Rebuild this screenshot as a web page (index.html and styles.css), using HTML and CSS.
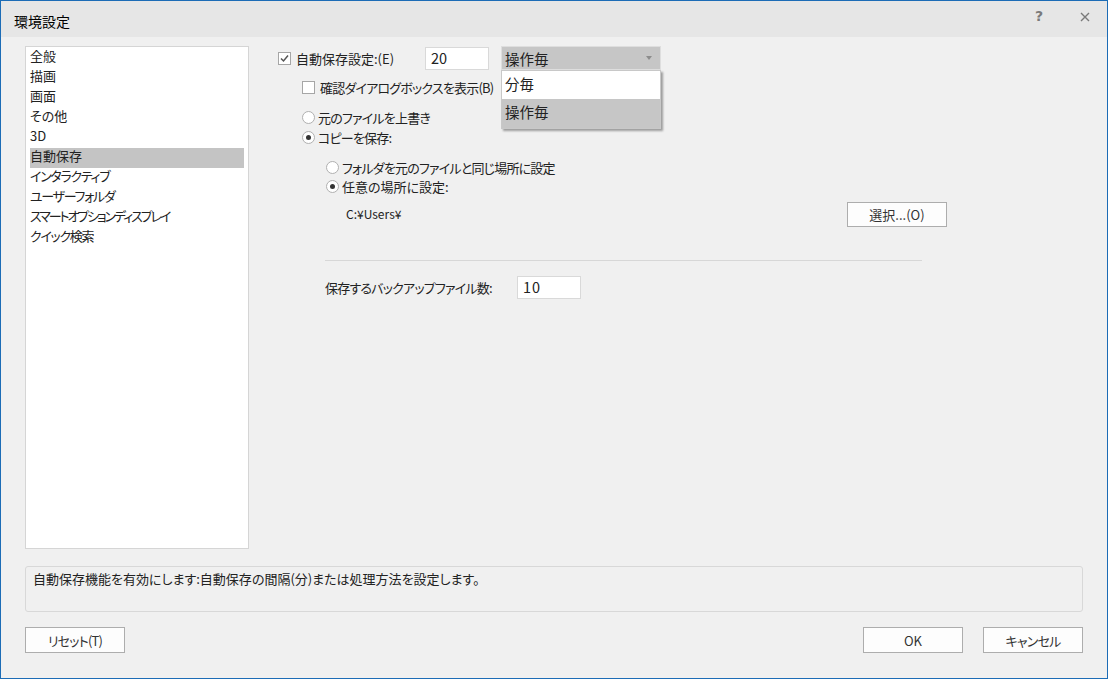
FILE: index.html
```html
<!DOCTYPE html>
<html>
<head>
    <title>環境設定</title>
    <link rel="stylesheet" href="styles.css">
</head>
<body>
    <div class="window">
        <div class="titlebar">
            <span class="title">環境設定</span>
            <div class="title-buttons">
                <span class="tb-help">?</span>
                <span class="tb-close">
                    <svg width="10" height="10" viewBox="0 0 10 10"><path d="M1 1L9 9M9 1L1 9" stroke="#7a7a7a" stroke-width="1.4"/></svg>
                </span>
            </div>
        </div>

        <div class="content">
            <div class="main">
                <ul class="category-list">
                    <li>全般</li>
                    <li>描画</li>
                    <li>画面</li>
                    <li>その他</li>
                    <li>3D</li>
                    <li class="selected">自動保存</li>
                    <li class="kana">インタラクティブ</li>
                    <li class="kana">ユーザーフォルダ</li>
                    <li class="kana wide">スマートオプションディスプレイ</li>
                    <li class="kana">クイック検索</li>
                </ul>

                <div class="settings">
                    <div class="row row-autosave">
                        <label class="check-label autosave-label">
                            <span class="checkbox checked">
                                <svg width="11" height="11" viewBox="0 0 11 11"><path d="M2 5.5L4.5 8L9 2.5" fill="none" stroke="#555" stroke-width="1.5"/></svg>
                            </span>
                            自動保存設定:(E)
                        </label>
                        <div class="textbox interval">20</div>
                        <div class="combo">
                            <div class="combo-field">
                                <span>操作毎</span>
                                <span class="combo-arrow"></span>
                            </div>
                            <div class="combo-popup">
                                <div class="combo-item">分毎</div>
                                <div class="combo-item active">操作毎</div>
                            </div>
                        </div>
                    </div>

                    <div class="row row-confirm indent-1">
                        <label class="check-label label-kana">
                            <span class="checkbox"></span>
                            確認ダイアログボックスを表示(B)
                        </label>
                    </div>

                    <div class="row row-radio first indent-1 label-kana">
                        <span class="radio"></span>元のファイルを上書き
                    </div>
                    <div class="row row-radio indent-1 label-kana">
                        <span class="radio on"></span>コピーを保存:
                    </div>

                    <div class="row row-radio first indent-2 label-kana">
                        <span class="radio"></span>フォルダを元のファイルと同じ場所に設定
                    </div>
                    <div class="row row-radio tight indent-2">
                        <span class="radio on"></span>任意の場所に設定:
                    </div>

                    <div class="row row-path">
                        <span class="path">C:¥Users¥</span>
                        <button class="btn">選択...(O)</button>
                    </div>

                    <div class="separator"></div>

                    <div class="row row-backup">
                        <span class="backup-label label-kana">保存するバックアップファイル数:</span>
                        <div class="textbox backup">10</div>
                    </div>
                </div>
            </div>

            <div class="description">自動保存機能を有効にします:自動保存の間隔(分)または処理方法を設定します。</div>

            <div class="footer">
                <button class="btn label-kana">リセット(T)</button>
                <div class="footer-right">
                    <button class="btn">OK</button>
                    <button class="btn label-kana">キャンセル</button>
                </div>
            </div>
        </div>
    </div>
</body>
</html>
```

FILE: styles.css
```css
html, body {
    margin: 0;
    padding: 0;
}

body {
    width: 1108px;
    height: 679px;
    font-family: "Noto Sans CJK JP", "Noto Sans", sans-serif;
    font-size: 13px;
    font-feature-settings: "palt";
    color: #222;
    overflow: hidden;
}

.window {
    width: 1108px;
    height: 679px;
    box-sizing: border-box;
    border: 1px solid #1c6cb6;
    background-color: #f0f0f0;
    display: flex;
    flex-direction: column;
}

.titlebar {
    height: 36px;
    background-color: #e6e6e6;
    display: flex;
    align-items: center;
    justify-content: space-between;
    padding: 0 17px 0 13px;
    flex-shrink: 0;
}

.title {
    font-size: 14px;
    color: #000;
    margin-top: 4px;
}

.title-buttons {
    display: flex;
    align-items: center;
    gap: 37px;
    margin-top: -6px;
}

.tb-help {
    font-family: "DejaVu Sans", sans-serif;
    font-size: 14px;
    font-weight: bold;
    color: #7a7a7a;
}

.tb-close {
    display: flex;
    margin-top: 2px;
}

.content {
    flex: 1;
    padding: 9px 24px 0 24px;
    display: flex;
    flex-direction: column;
}

.main {
    display: flex;
    gap: 29px;
    height: 503px;
}

.category-list {
    list-style: none;
    margin: 0;
    padding: 1px 4px;
    width: 224px;
    box-sizing: border-box;
    background-color: #fff;
    border: 1px solid #d5d5d5;
    flex-shrink: 0;
}

.category-list li {
    height: 20px;
    line-height: 16px;
    white-space: nowrap;
}

.category-list li.kana {
    letter-spacing: -1.3px;
}

.category-list li.wide {
    letter-spacing: -2.1px;
}

.category-list li.selected {
    background-color: #c4c4c4;
}

.label-kana {
    letter-spacing: -0.8px;
}

.settings {
    flex: 1;
    position: relative;
}

.row {
    display: flex;
    align-items: center;
    white-space: nowrap;
}

.row-autosave {
    height: 24px;
}

.check-label {
    display: flex;
    align-items: center;
}

.autosave-label {
    width: 147px;
}

.checkbox {
    width: 13px;
    height: 13px;
    box-sizing: border-box;
    border: 1px solid #a6a6a6;
    background-color: #fff;
    margin-right: 5px;
    display: flex;
    align-items: center;
    justify-content: center;
}

.textbox {
    height: 23px;
    box-sizing: border-box;
    border: 1px solid #d9d9d9;
    background-color: #fff;
    font-size: 14.5px;
    line-height: 20px;
    padding-left: 5px;
}

.interval {
    width: 64px;
}

.combo {
    position: relative;
    margin-left: 12px;
    width: 160px;
}

.combo-field {
    height: 24px;
    box-sizing: border-box;
    border: 1px solid #dedede;
    background-color: #c6c6c6;
    display: flex;
    align-items: center;
    justify-content: space-between;
    padding: 0 8px 0 3px;
    font-size: 14.5px;
}

.combo-arrow {
    width: 0;
    height: 0;
    border-left: 3px solid transparent;
    border-right: 3px solid transparent;
    border-top: 4px solid #8c8c8c;
}

.combo-popup {
    position: absolute;
    top: 24px;
    left: 0;
    width: 160px;
    box-sizing: border-box;
    border: 1px solid #c8c8c8;
    background-color: #fff;
    box-shadow: 2px 2px 2px rgba(0,0,0,0.35);
    z-index: 5;
}

.combo-item {
    height: 28px;
    line-height: 26px;
    padding-left: 3px;
    font-size: 14.5px;
}

.combo-item.active {
    background-color: #c6c6c6;
    height: 29px;
}

.indent-1 {
    padding-left: 24px;
}

.indent-2 {
    padding-left: 48px;
}

.row-confirm {
    height: 20px;
    margin-top: 7px;
}

.row-confirm .checkbox {
    margin-right: 5px;
}

.row-radio {
    height: 20px;
}

.row-radio.first {
    margin-top: 10px;
}

.row-radio.tight {
    height: 18px;
}

.radio {
    width: 13px;
    height: 13px;
    box-sizing: border-box;
    border: 1px solid #b0b0b0;
    border-radius: 50%;
    background-color: #fff;
    margin-right: 3px;
    display: flex;
    align-items: center;
    justify-content: center;
}

.radio.on::after {
    content: "";
    width: 5px;
    height: 5px;
    border-radius: 50%;
    background-color: #333;
}

.row-path {
    margin-top: 7px;
    height: 25px;
    width: 669px;
    box-sizing: border-box;
    padding-left: 68px;
    justify-content: space-between;
}

.path {
    font-size: 12px;
    margin-top: -2px;
}

.btn {
    width: 100px;
    height: 25px;
    box-sizing: border-box;
    border: 1px solid #adadad;
    background-color: #fdfdfd;
    font-family: inherit;
    font-size: 13px;
    font-feature-settings: "palt";
    color: #333;
    padding: 0;
}

.separator {
    margin: 33px 0 0 47px;
    width: 597px;
    height: 1px;
    background-color: #d7d7d7;
}

.row-backup {
    margin-top: 15px;
    padding-left: 47px;
    height: 23px;
}

.backup-label {
    width: 192px;
}

.backup {
    width: 64px;
    letter-spacing: 1px;
}

.description {
    margin-top: 17px;
    height: 46px;
    box-sizing: border-box;
    border: 1px solid #d8d8d8;
    border-radius: 3px;
    padding: 3px 7px;
    line-height: 18px;
}

.footer {
    margin-top: 15px;
    display: flex;
    justify-content: space-between;
}

.footer .btn {
    height: 26px;
}

.footer-right {
    display: flex;
    gap: 20px;
}
```
